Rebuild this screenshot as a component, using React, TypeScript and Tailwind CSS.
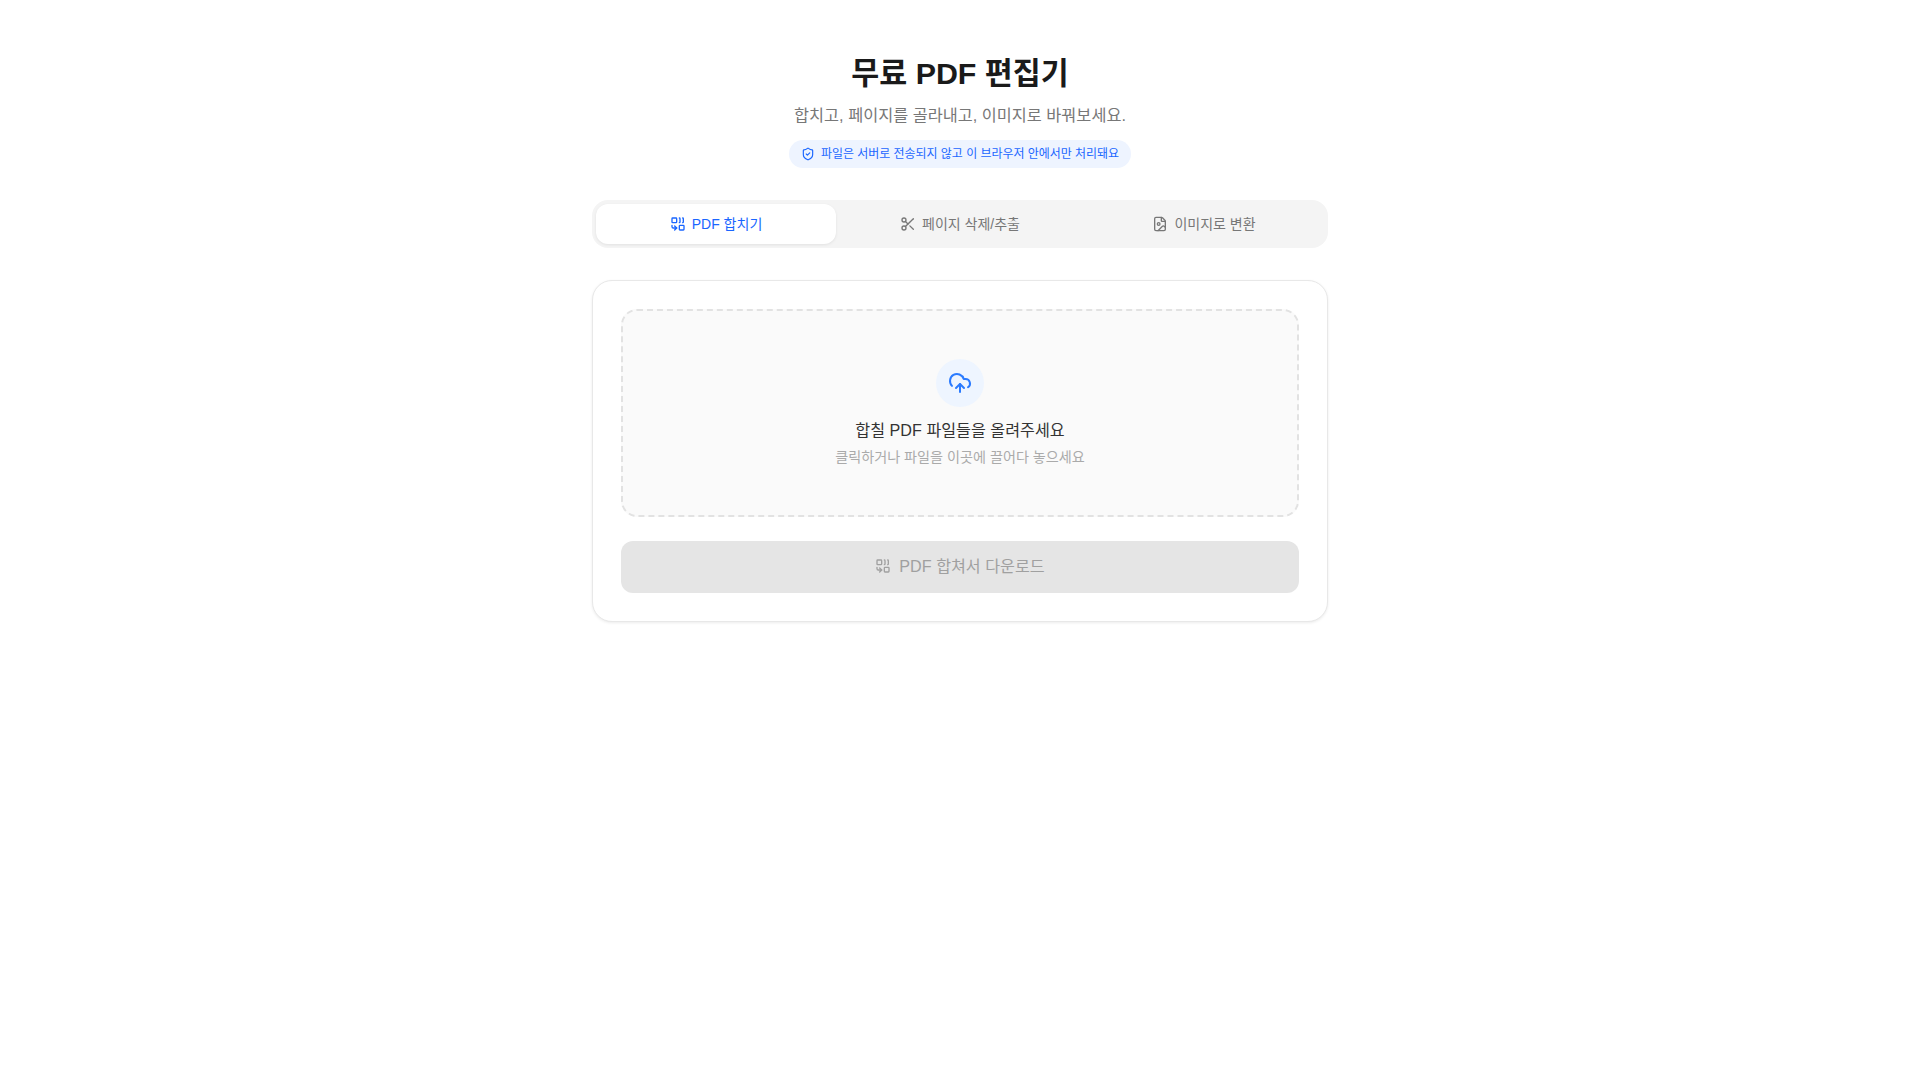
import { CloudUpload, Combine, FileImage, Scissors, ShieldCheck } from "lucide-react";

const TABS = [
  { label: "PDF 합치기", icon: Combine, active: true },
  { label: "페이지 삭제/추출", icon: Scissors, active: false },
  { label: "이미지로 변환", icon: FileImage, active: false },
];

export default function App() {
  return (
    <div className="min-h-screen bg-white font-['Liberation_Sans','Noto_Sans_CJK_KR',sans-serif] text-[#1a1a1a]">
      <div className="mx-auto flex max-w-[768px] flex-col px-4 pt-[48px]">
        <header className="mb-8 flex flex-col items-center">
          <h1 className="text-[30.4px] leading-[50px] font-bold">무료 PDF 편집기</h1>
          <p className="mt-[5px] text-[16.32px] leading-6 text-[#777777]">합치고, 페이지를 골라내고, 이미지로 바꿔보세요.</p>
          <div className="mt-[13px] flex h-[28px] items-center gap-1.5 rounded-full bg-[#eef4ff] px-3 text-[11.96px] text-[#1a66ff]">
            <ShieldCheck size={14} />
            <span className="pt-0.5">파일은 서버로 전송되지 않고 이 브라우저 안에서만 처리돼요</span>
          </div>
        </header>

        <nav className="mb-8 flex gap-1 rounded-2xl bg-[#f4f4f4] p-1">
          {TABS.map((tab) => (
            <button
              key={tab.label}
              className={
                tab.active
                  ? "flex h-10 flex-1 items-center justify-center gap-1.5 rounded-xl bg-white text-sm text-[#1a66ff] shadow-[0_1px_3px_rgba(0,0,0,0.08)]"
                  : "flex h-10 flex-1 items-center justify-center gap-1.5 rounded-xl text-sm text-[#777777]"
              }
            >
              <tab.icon size={16} />
              {tab.label}
            </button>
          ))}
        </nav>

        <section className="rounded-[20px] border border-[#e8e8e8] bg-white p-[28px] shadow-[0_1px_3px_rgba(0,0,0,0.08)]">
          <div className="flex h-[208px] flex-col items-center justify-center rounded-2xl border-2 border-dashed border-[#e2e2e2] bg-[#fafafa]">
            <div className="flex h-12 w-12 items-center justify-center rounded-full bg-[#eef5ff] text-[#2b7bff]">
              <CloudUpload size={24} />
            </div>
            <p className="mt-[11px] text-[16.16px] leading-6 text-[#333333]">합칠 PDF 파일들을 올려주세요</p>
            <p className="mt-[5px] text-[14.14px] leading-5 text-[#aaaaaa]">클릭하거나 파일을 이곳에 끌어다 놓으세요</p>
          </div>
          <button className="mt-6 flex h-[52px] w-full items-center justify-center gap-2 rounded-xl bg-[#e5e5e5] pb-0.5 text-[16.16px] text-[#a0a0a0]">
            <Combine size={16} />
            PDF 합쳐서 다운로드
          </button>
        </section>
      </div>
    </div>
  );
}
